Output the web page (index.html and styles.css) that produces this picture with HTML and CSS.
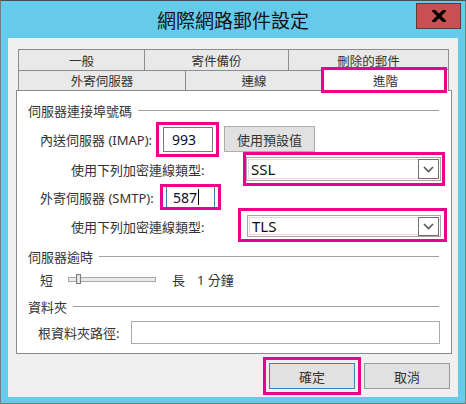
FILE: index.html
```html
<!DOCTYPE html>
<html lang="zh-Hant">
<head>
<meta charset="utf-8">
<title>網際網路郵件設定</title>
<link rel="stylesheet" href="styles.css">
</head>
<body>
<div class="window">
  <div class="titlebar">
    <div class="title">網際網路郵件設定</div>
    <div class="close" aria-label="關閉">
      <svg width="14" height="12" viewBox="0 0 14 12"><path d="M2 1 L12 11 M12 1 L2 11" stroke="#000" stroke-width="3.2" stroke-linecap="square" fill="none"/></svg>
    </div>
  </div>
  <div class="client">
    <div class="tabs">
      <div class="tabrow row1">
        <div class="tab t-general">一般</div>
        <div class="tab t-sent">寄件備份</div>
        <div class="tab t-deleted">刪除的郵件</div>
      </div>
      <div class="tabrow row2">
        <div class="tab t-out">外寄伺服器</div>
        <div class="tab t-conn">連線</div>
        <div class="tab t-adv selected mark">進階</div>
      </div>
    </div>
    <div class="panel">
      <div class="group-head"><span>伺服器連接埠號碼</span><i class="rule"></i></div>
      <div class="row r-imap">
        <span class="lbl lbl-imap">內送伺服器 (IMAP):</span>
        <div class="textbox tb-imap mark">993</div>
        <div class="btn btn-defaults">使用預設值</div>
      </div>
      <div class="row r-enc1">
        <span class="lbl">使用下列加密連線類型:</span>
        <div class="combo combo-ssl mark"><span class="combo-val">SSL</span><span class="drop"><svg width="11" height="7" viewBox="0 0 11 7"><path d="M1 1 L5.5 5.5 L10 1" stroke="#555" stroke-width="1.6" fill="none"/></svg></span></div>
      </div>
      <div class="row r-smtp">
        <span class="lbl lbl-smtp">外寄伺服器 (SMTP):</span>
        <div class="textbox tb-smtp focused mark">587<i class="caret"></i></div>
      </div>
      <div class="row r-enc2">
        <span class="lbl">使用下列加密連線類型:</span>
        <div class="combo combo-tls mark"><span class="combo-val">TLS</span><span class="drop"><svg width="11" height="7" viewBox="0 0 11 7"><path d="M1 1 L5.5 5.5 L10 1" stroke="#555" stroke-width="1.6" fill="none"/></svg></span></div>
      </div>
      <div class="group-head gh-timeout"><span>伺服器逾時</span><i class="rule"></i></div>
      <div class="row r-slider">
        <span class="lbl">短</span>
        <div class="track"><i class="thumb"></i></div>
        <span class="lbl lbl-long">長</span>
        <span class="lbl lbl-min">1 分鐘</span>
      </div>
      <div class="group-head gh-folder"><span>資料夾</span><i class="rule"></i></div>
      <div class="row r-root">
        <span class="lbl lbl-root">根資料夾路徑:</span>
        <div class="textbox tb-root"></div>
      </div>
    </div>
    <div class="actions">
      <div class="btn btn-ok mark">確定</div>
      <div class="btn btn-cancel">取消</div>
    </div>
  </div>
</div>
</body>
</html>
```

FILE: styles.css
```css
* { box-sizing: border-box; margin: 0; padding: 0; }

body {
  margin: 0;
  background: #ffffff;
  font-family: "Noto Sans", "Noto Sans CJK TC", sans-serif;
  font-size: 13px;
  color: #333333;
}

.window {
  width: 466px;
  height: 404px;
  border: 1px solid #7c7c7c;
  border-top-color: #4e4e4e;
  background: #66cbea;
  padding: 0 7px 6px 7px;
  display: flex;
  flex-direction: column;
}

.titlebar {
  height: 37px;
  margin: 0 -7px;
  display: grid;
  grid-template-columns: 1fr auto 1fr;
}

.title {
  grid-column: 2;
  font-family: "Noto Sans CJK TC", sans-serif;
  font-size: 19px;
  line-height: 37px;
  color: #111;
}

.close {
  grid-column: 3;
  justify-self: end;
  align-self: start;
  margin-top: 2px;
  margin-right: 4px;
  width: 45px;
  height: 26px;
  background: #c75050;
  border: 1px solid #5e3b3b;
  display: flex;
  align-items: center;
  justify-content: center;
}

.client {
  flex: 1;
  background: #f0f0f0;
  padding-top: 11px;
  display: flex;
  flex-direction: column;
}

/* tabs */
.tabs {
  margin-left: 10px;
  width: 431px;
}
.tabrow { display: flex; }
.row1 { height: 21px; }
.row2 { height: 20px; }
.tab {
  border-top: 1px solid #8c8c90;
  border-left: 1px solid #8c8c90;
  background: #e9e9e9;
  color: #333333;
  font-size: 12.5px;
  display: flex;
  align-items: center;
  justify-content: center;
}
.tab:last-child { border-right: 1px solid #8c8c90; }
.t-general { width: 126px; }
.t-sent { width: 144px; }
.t-deleted { width: 161px; }
.t-out { width: 167px; }
.t-conn { width: 137px; }
.t-adv { width: 127px; }
.tab.selected {
  background: #ffffff;
  height: 22px;
  margin-top: -1px;
  position: relative;
  z-index: 2;
}

/* annotation frames */
.mark { position: relative; }
.mark::after {
  content: "";
  position: absolute;
  border: 3px solid #ec008c;
  pointer-events: none;
  z-index: 5;
}
.t-adv::after { left: -2px; top: -3px; right: 1px; bottom: -2px; }
.tb-imap::after { left: -8px; top: -6px; right: -7px; bottom: -6px; }
.combo-ssl::after { left: -4px; top: -6px; right: -5px; bottom: -6px; }
.tb-smtp::after { left: -7px; top: -3px; right: -7px; bottom: -3px; }
.combo-tls::after { left: -10px; top: -8px; right: -7px; bottom: -6px; }
.btn-ok::after { left: -7px; top: -7px; right: -7px; bottom: -7px; }

/* panel */
.panel {
  margin-left: 8px;
  width: 436px;
  height: 264px;
  border: 1px solid #8c8c90;
  background: #ffffff;
  padding: 9px 10px 0 11px;
}

.group-head {
  height: 20px;
  display: flex;
  align-items: center;
  color: #333333;
}
.group-head .rule {
  flex: 1;
  height: 1px;
  background: #a0a0a0;
  margin-left: 6px;
  margin-right: 2px;
}

.row { display: flex; align-items: center; }
.lbl { color: #333333; white-space: nowrap; }

.r-imap { margin-top: 6px; height: 26px; padding-left: 12px; }
.lbl-imap { width: 123px; }
.textbox {
  background: #ffffff;
  border: 1px solid #7a7a7a;
  font-size: 14px;
  color: #0d0d2a;
  display: flex;
  align-items: center;
  padding-left: 8px;
}
.tb-imap { width: 50px; height: 25px; }

.btn {
  background: #e1e1e1;
  border: 1px solid #adadad;
  color: #333333;
  font-size: 13px;
  display: flex;
  align-items: center;
  justify-content: center;
}
.btn-defaults { width: 91px; height: 26px; margin-left: 11px; }

.r-enc1 { margin-top: 5px; height: 24px; padding-left: 43px; }
.r-enc2 { margin-top: 6px; height: 22px; padding-left: 43px; }
.combo {
  margin-left: auto;
  background: #ffffff;
  border: 1px solid #a6a6a6;
  box-shadow: inset 0 0 0 1px #ffffff, inset 0 0 0 2px #dedede;
  display: flex;
  align-items: center;
  padding: 0 1px 0 4px;
  color: #111;
  font-size: 15px;
}
.combo-ssl { width: 195px; height: 24px; }
.combo-tls { width: 194px; height: 22px; }
.combo-val { flex: 1; }
.drop {
  width: 21px;
  height: 20px;
  border: 1px solid #707070;
  background: #ffffff;
  display: flex;
  align-items: center;
  justify-content: center;
}
.combo-tls .drop { height: 19px; }

.r-smtp { margin-top: 4px; height: 24px; padding-left: 12px; }
.lbl-smtp { width: 126px; }
.tb-smtp { width: 49px; height: 22px; padding-left: 6px; }
.textbox.focused { border-color: #3c7fb1; }
.caret {
  width: 1px;
  height: 16px;
  background: #000;
  margin-left: 1px;
}

.gh-timeout { margin-top: 9px; }
.r-slider { margin-top: 4px; height: 18px; padding-left: 12px; }
.track {
  position: relative;
  width: 88px;
  height: 5px;
  margin-left: 15px;
  background: #e7eaea;
  border: 1px solid #a8a8a8;
}
.thumb {
  position: absolute;
  left: 7px;
  top: -4px;
  width: 5px;
  height: 10px;
  background: #e4e4e4;
  border: 1px solid #7d7d7d;
}
.lbl-long { margin-left: 16px; }
.lbl-min { margin-left: 12px; }

.gh-folder { margin-top: 8px; }
.r-root { margin-top: 5px; height: 23px; padding-left: 10px; }
.lbl-root { width: 93px; }
.tb-root {
  flex: 1;
  height: 23px;
  margin-right: 1px;
  border-color: #ababab;
}

/* dialog buttons */
.actions {
  margin-top: 9px;
  margin-right: 8px;
  display: flex;
  justify-content: flex-end;
  gap: 9px;
}
.actions .btn { width: 86px; height: 26px; }
.btn-ok { border-color: #3c7fb1; }
.btn-cancel { border-color: #999999; }
```
